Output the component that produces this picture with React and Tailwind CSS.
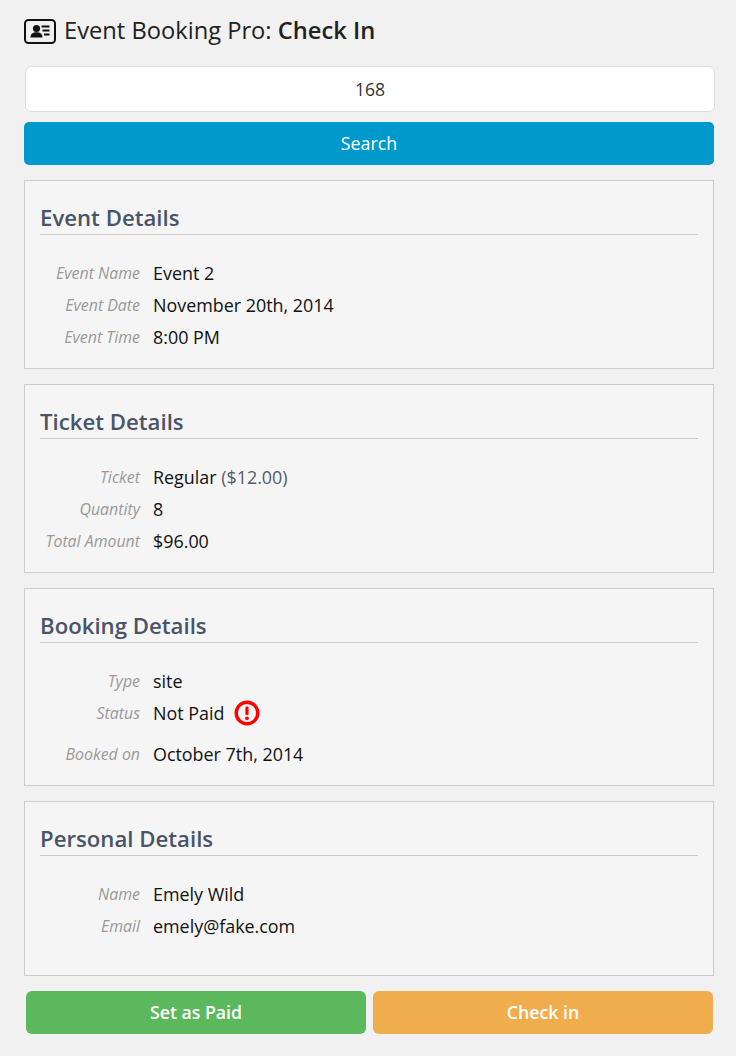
import React from 'react';

const Row = ({ label, children, extra = '' }) => (
  <div className={`flex leading-[32px] h-[32px] ${extra}`}>
    <div className="w-[100px] shrink-0 text-right italic text-[15.9px] text-[#999999] whitespace-nowrap flex justify-end">{label}</div>
    <div className="ml-[13px] text-[17.9px] text-[#111111] flex items-center">{children}</div>
  </div>
);

const Panel = ({ title, children, extra = '' }) => (
  <div className={`border border-[#cccccc] bg-[#f5f5f5] p-[15px] ${extra}`}>
    <h2 className="h-[39px] border-b border-[#cccccc] text-[22.2px] leading-[44px] font-semibold text-[#4a5468]">{title}</h2>
    <div className="mt-[22px]">{children}</div>
  </div>
);

const App = () => {
  return (
    <div className="w-[736px] h-[1056px] overflow-hidden bg-[#f1f1f1] pl-[24px] pr-[22px] font-['Open_Sans',sans-serif]">
      <div className="h-[66px] flex items-center pb-[4px]">
        <svg width="32" height="25" viewBox="0 0 32 25" className="text-[#111111]">
          <rect x="1" y="1" width="30" height="23" rx="3.500" fill="#f1f1f1" stroke="currentColor" strokeWidth="2" />
          <circle cx="12.500" cy="9.500" r="3.600" fill="currentColor" />
          <path d="M6.500 18.500c0-3.600 2.400-5.200 6-5.200s6 1.600 6 5.200z" fill="currentColor" />
          <path d="M17.500 6.500h8v2h-8zM18.500 10.500h7v2h-7zM20 14.500h5.500v2H20z" fill="currentColor" />
        </svg>
        <h1 className="ml-[8px] text-[23.7px] text-[#222222] whitespace-nowrap">
          Event Booking Pro: <span className="font-semibold">Check In</span>
        </h1>
      </div>

      <div className="ml-[1px] mr-[-1px] h-[46px] rounded-[6px] border border-[#dddddd] bg-white flex items-center justify-center text-[17.6px] text-[#333333]">
        168
      </div>
      <button className="mt-[10px] block w-full h-[43px] rounded-[5px] bg-[#0099cc] text-white text-[17.8px] font-medium">
        Search
      </button>

      <div className="mt-[15px] flex flex-col gap-[15px]">
        <Panel title="Event Details">
          <Row label="Event Name">Event 2</Row>
          <Row label="Event Date">November 20th, 2014</Row>
          <Row label="Event Time">8:00 PM</Row>
        </Panel>

        <Panel title="Ticket Details">
          <Row label="Ticket">
            Regular&nbsp;<span className="text-[#555c6b]">($12.00)</span>
          </Row>
          <Row label="Quantity">8</Row>
          <Row label="Total Amount">$96.00</Row>
        </Panel>

        <Panel title="Booking Details">
          <Row label="Type">site</Row>
          <Row label="Status" extra="mb-[9px]">
            Not Paid
            <svg width="26" height="26" viewBox="0 0 26 26" className="ml-[10px]">
              <circle cx="13" cy="13" r="10.800" fill="none" stroke="#ff0000" strokeWidth="3.400" />
              <rect x="11.400" y="6.500" width="3.200" height="8.500" rx="1.200" fill="#ff0000" />
              <circle cx="13" cy="18.300" r="1.900" fill="#ff0000" />
            </svg>
          </Row>
          <Row label="Booked on">October 7th, 2014</Row>
        </Panel>

        <Panel title="Personal Details" extra="pb-[33px]">
          <Row label="Name">Emely Wild</Row>
          <Row label="Email">emely@fake.com</Row>
        </Panel>
      </div>

      <div className="mt-[15px] ml-[2px] flex gap-[7px]">
        <button className="w-[340px] h-[43px] rounded-[6px] bg-[#5cb85c] text-white text-[17.7px] font-semibold">
          Set as Paid
        </button>
        <button className="w-[340px] h-[43px] rounded-[6px] bg-[#f0ad4e] text-white text-[17.7px] font-semibold">
          Check in
        </button>
      </div>
    </div>
  );
};

export default App;
